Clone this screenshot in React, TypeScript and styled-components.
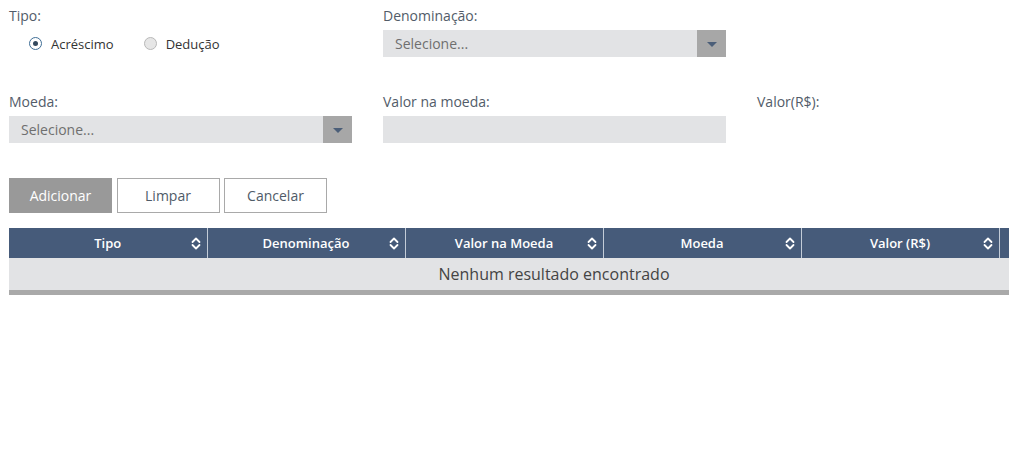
import React from "react";
import styled, { createGlobalStyle } from "styled-components";

const Global = createGlobalStyle`
  html, body { margin: 0; padding: 0; background: #fff; overflow: hidden; }
  body { font-family: "Open Sans", "Liberation Sans", sans-serif; }
  * { box-sizing: border-box; }
`;

const Page = styled.div`
  width: 1009px;
  padding: 7px 0 0 9px;
  overflow: hidden;
`;

const FormGrid = styled.div`
  display: grid;
  grid-template-columns: 343px 343px 243px;
  column-gap: 31px;
  row-gap: 36px;
`;

const Field = styled.div`
  display: flex;
  flex-direction: column;
`;

const Label = styled.label`
  font-size: 14px;
  line-height: 18px;
  color: #525c69;
  margin-bottom: 5px;
`;

const RadioGroup = styled.div`
  display: flex;
  align-items: center;
  height: 27px;
  padding-left: 20px;
  gap: 30px;
`;

const RadioItem = styled.label`
  display: flex;
  align-items: center;
  gap: 9px;
  font-size: 13px;
  color: #333;
`;

const RadioCircle = styled.span<{ $checked?: boolean }>`
  width: 13px;
  height: 13px;
  border-radius: 50%;
  border: 1px solid ${(p) => (p.$checked ? "#3f6e96" : "#b8b8b8")};
  background: ${(p) => (p.$checked ? "#fff" : "#e6e6e6")};
  display: flex;
  align-items: center;
  justify-content: center;
  &::after {
    content: "";
    display: ${(p) => (p.$checked ? "block" : "none")};
    width: 5px;
    height: 5px;
    border-radius: 50%;
    background: #34495e;
  }
`;

const SelectBox = styled.div`
  display: flex;
  height: 27px;
  background: #e2e3e5;
`;

const SelectText = styled.span`
  flex: 1;
  font-size: 14px;
  line-height: 27px;
  color: #6f6f6f;
  padding-left: 12px;
`;

const SelectArrow = styled.span`
  width: 29px;
  background: #a7a7a7;
  display: flex;
  align-items: center;
  justify-content: center;
  &::after {
    content: "";
    border-left: 5px solid transparent;
    border-right: 5px solid transparent;
    border-top: 5px solid #4b5e78;
    margin-top: 1px;
  }
`;

const Input = styled.div`
  height: 27px;
  background: #e2e3e5;
`;

const Buttons = styled.div`
  display: flex;
  gap: 4.5px;
  margin-top: 35px;
`;

const Button = styled.button<{ $primary?: boolean }>`
  width: 103px;
  height: 35px;
  font-family: "Open Sans", "Liberation Sans", sans-serif;
  font-size: 14px;
  border: 1px solid ${(p) => (p.$primary ? "#999" : "#a9a9a9")};
  background: ${(p) => (p.$primary ? "#999999" : "#fff")};
  color: ${(p) => (p.$primary ? "#fff" : "#4f5b68")};
  padding: 0;
`;

const TableWrap = styled.div`
  margin-top: 15px;
  width: 1000px;
  overflow: hidden;
  border-bottom: 5px solid #a9a9a9;
`;

const Table = styled.table`
  width: 1090px;
  border-collapse: collapse;
  table-layout: fixed;
`;

const Th = styled.th<{ $w: number }>`
  width: ${(p) => p.$w}px;
  height: 30px;
  background: #465b7a;
  color: #fff;
  font-size: 13px;
  font-weight: 600;
  border-right: 1px solid #c3ccd8;
  padding: 0;
  position: relative;
  text-align: center;
`;

const SortIcon = styled.svg`
  position: absolute;
  right: 6px;
  top: 9px;
`;

const EmptyCell = styled.td`
  height: 32px;
  background: #e2e3e5;
  text-align: center;
  font-size: 16px;
  color: #444;
  padding: 0;
`;

const Sort = () => (
  <SortIcon width="10" height="13" viewBox="0 0 10 13" fill="none">
    <path d="M1.5 5 L5 1.5 L8.5 5" stroke="#fff" strokeWidth="1.8" strokeLinecap="round" strokeLinejoin="round" />
    <path d="M1.5 8 L5 11.5 L8.5 8" stroke="#fff" strokeWidth="1.8" strokeLinecap="round" strokeLinejoin="round" />
  </SortIcon>
);

const cols = ["Tipo", "Denominação", "Valor na Moeda", "Moeda", "Valor (R$)"];

export default function App() {
  return (
    <>
      <Global />
      <Page>
        <FormGrid>
          <Field>
            <Label>Tipo:</Label>
            <RadioGroup>
              <RadioItem>
                <RadioCircle $checked />
                Acréscimo
              </RadioItem>
              <RadioItem>
                <RadioCircle />
                Dedução
              </RadioItem>
            </RadioGroup>
          </Field>
          <Field>
            <Label>Denominação:</Label>
            <SelectBox>
              <SelectText>Selecione...</SelectText>
              <SelectArrow />
            </SelectBox>
          </Field>
          <Field />
          <Field>
            <Label>Moeda:</Label>
            <SelectBox>
              <SelectText>Selecione...</SelectText>
              <SelectArrow />
            </SelectBox>
          </Field>
          <Field>
            <Label>Valor na moeda:</Label>
            <Input />
          </Field>
          <Field>
            <Label>Valor(R$):</Label>
          </Field>
        </FormGrid>
        <Buttons>
          <Button $primary>Adicionar</Button>
          <Button>Limpar</Button>
          <Button>Cancelar</Button>
        </Buttons>
        <TableWrap>
          <Table>
            <thead>
              <tr>
                {cols.map((c) => (
                  <Th key={c} $w={198}>
                    {c}
                    <Sort />
                  </Th>
                ))}
                <Th $w={100}></Th>
              </tr>
            </thead>
            <tbody>
              <tr>
                <EmptyCell colSpan={6}>Nenhum resultado encontrado</EmptyCell>
              </tr>
            </tbody>
          </Table>
        </TableWrap>
      </Page>
    </>
  );
}
